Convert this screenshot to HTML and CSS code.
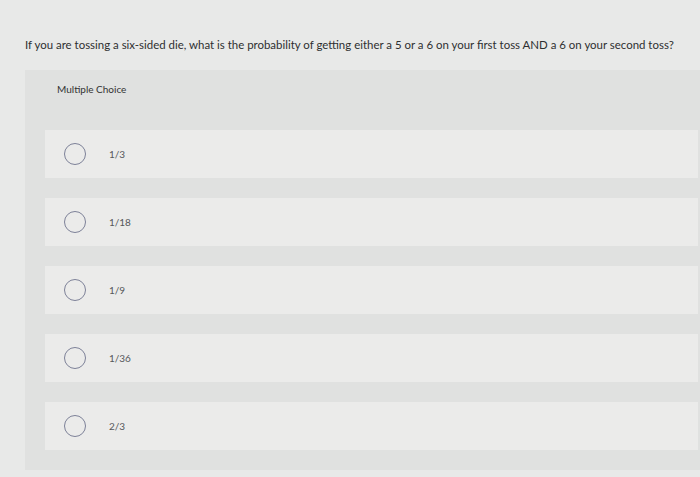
FILE: index.html
```html
<!DOCTYPE html>
<html>
<head>
<meta charset="utf-8">
<link rel="stylesheet" href="styles.css">
</head>
<body>
<div class="page">
  <p class="question">If you are tossing a six-sided die, what is the probability of getting either a 5 or a 6 on your first toss AND a 6 on your second toss?</p>
  <div class="panel">
    <div class="label">Multiple Choice</div>
    <div class="options">
      <div class="option"><span class="radio"></span><span class="text">1/3</span></div>
      <div class="option"><span class="radio"></span><span class="text">1/18</span></div>
      <div class="option"><span class="radio"></span><span class="text">1/9</span></div>
      <div class="option"><span class="radio"></span><span class="text">1/36</span></div>
      <div class="option"><span class="radio"></span><span class="text">2/3</span></div>
    </div>
  </div>
</div>
</body>
</html>
```
FILE: styles.css
```css
html, body {
  margin: 0;
  padding: 0;
  background: #e8e9e8;
  height: 100%;
  overflow: hidden;
}
.page {
  font-family: Lato, "Open Sans", sans-serif;
  color: #2e2f30;
  padding-top: 38px;
}
.question {
  margin: 0 0 0 25px;
  font-size: 11.45px;
  line-height: 14px;
  white-space: nowrap;
}
.panel {
  margin: 18px 0 0 25px;
  background: #e0e1e0;
  padding: 13px 2px 20px 20px;
}
.label {
  margin-left: 12px;
  font-size: 10px;
  line-height: 12px;
  color: #333;
}
.options {
  margin-top: 35px;
  display: flex;
  flex-direction: column;
  gap: 20px;
}
.option {
  height: 48px;
  background: #ebebea;
  display: flex;
  align-items: center;
  padding-left: 19px;
}
.radio {
  border: 1.6px solid #7d8198;
  border-radius: 50%;
  box-sizing: border-box;
  width: 22px;
  height: 22px;
  flex: none;
}
.text {
  margin-left: 23px;
  font-size: 10px;
  color: #55575a;
}
```
